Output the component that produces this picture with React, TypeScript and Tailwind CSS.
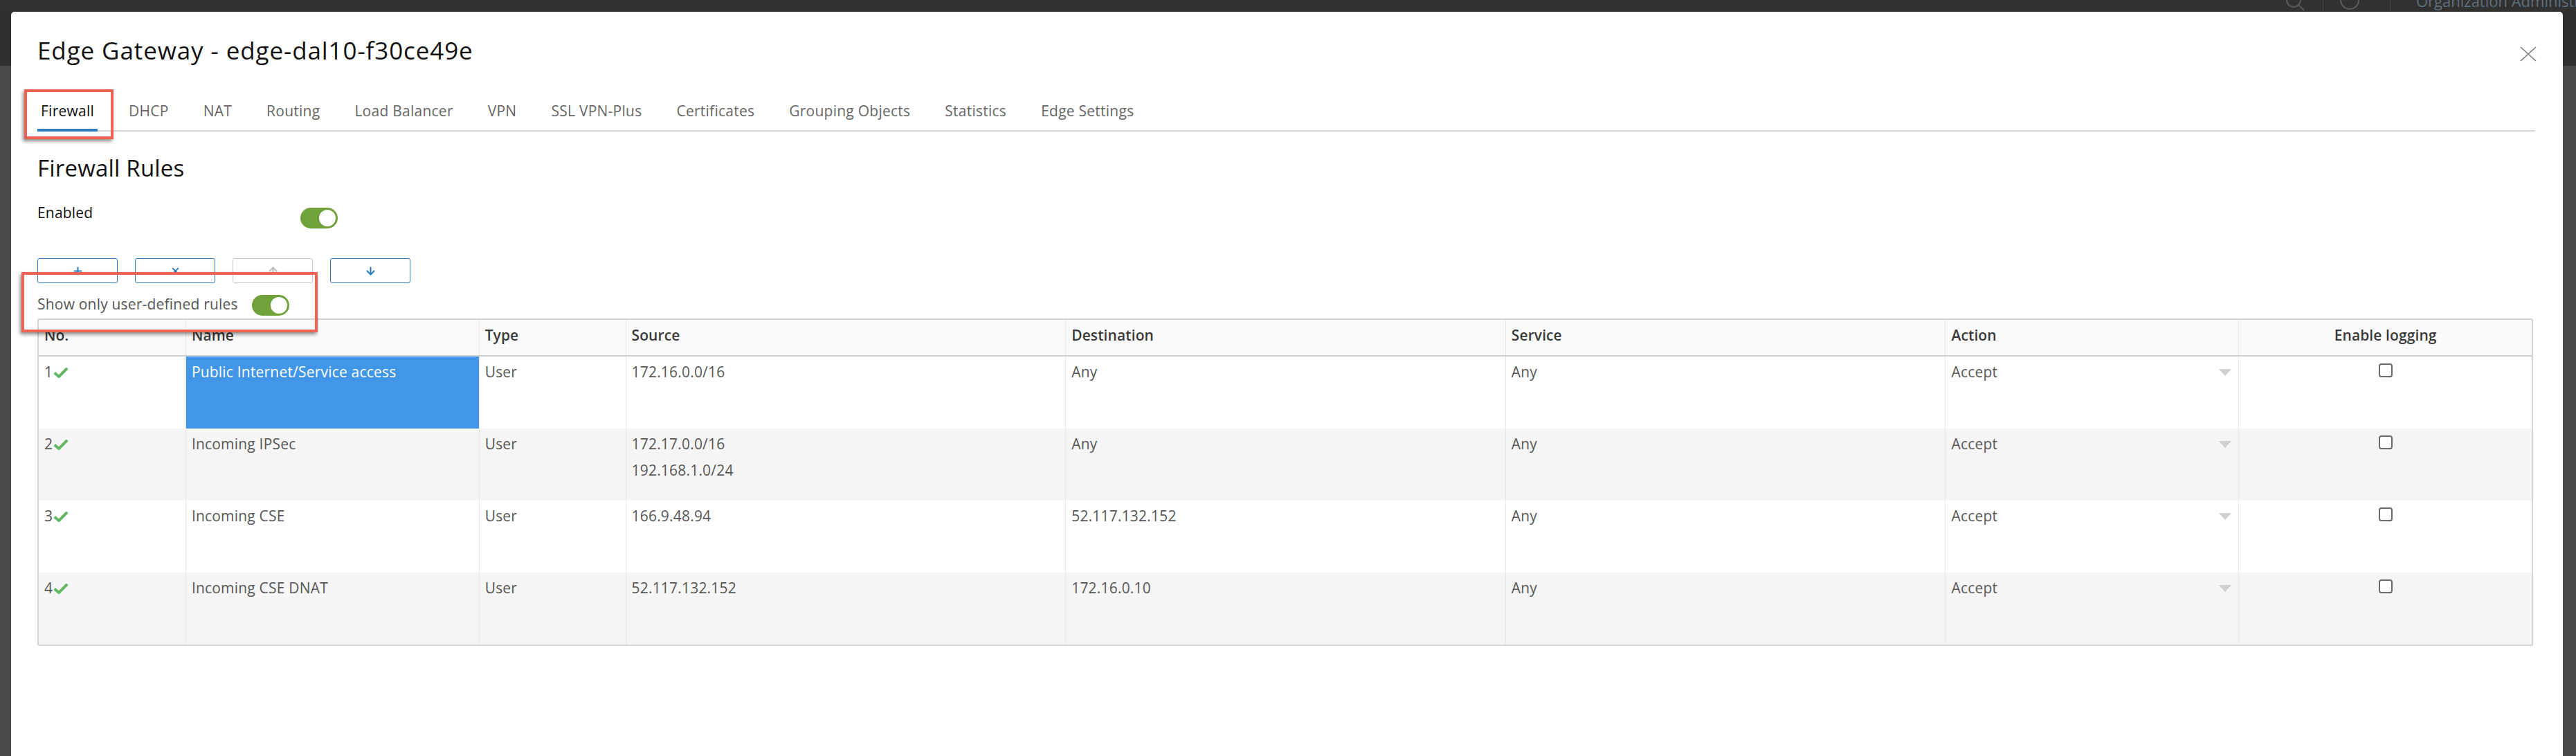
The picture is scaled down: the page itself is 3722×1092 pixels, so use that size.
import React from 'react';
import { ArrowDown, ArrowUp, Plus, X } from 'lucide-react';

const tabs = [
  'Firewall',
  'DHCP',
  'NAT',
  'Routing',
  'Load Balancer',
  'VPN',
  'SSL VPN-Plus',
  'Certificates',
  'Grouping Objects',
  'Statistics',
  'Edge Settings'
];

const rules = [
  { no: 1, name: 'Public Internet/Service access', source: ['172.16.0.0/16'], destination: 'Any', selected: true },
  { no: 2, name: 'Incoming IPSec', source: ['172.17.0.0/16', '192.168.1.0/24'], destination: 'Any' },
  { no: 3, name: 'Incoming CSE', source: ['166.9.48.94'], destination: '52.117.132.152' },
  { no: 4, name: 'Incoming CSE DNAT', source: ['52.117.132.152'], destination: '172.16.0.10' }
];

const Toggle = () => (
  <div className="flex h-[30px] w-[54px] items-center justify-end rounded-full bg-[#71a13b] p-[3px]">
    <div className="size-[24px] rounded-full bg-white" />
  </div>
);

const Check = () => (
  <svg width="22" height="16" viewBox="0 0 22 16" className="ml-[1px]">
    <path d="M1.8 8.5 L8 14 L20.2 1.8" fill="none" stroke="#62b562" strokeWidth="4" strokeLinejoin="round" />
  </svg>
);

const Gutter = ({ width }: { width: string }) => (
  <div className={`flex ${width} shrink-0 flex-col`}>
    <div className="h-[78px] bg-[#303030]" />
    <div className="flex-1 bg-[#4b4b4b]" />
  </div>
);

const TopBar = () => (
  <div className="flex h-[17px] shrink-0 items-start overflow-hidden bg-[#313131]">
    <div className="flex-1" />
    <svg width="34" height="17" viewBox="0 0 34 17" className="ml-auto">
      <circle cx="14" cy="0" r="10" fill="none" stroke="#5a5a5a" strokeWidth="2" />
      <path d="M21 7 L29 15" stroke="#5a5a5a" strokeWidth="2" />
    </svg>
    <div className="ml-[22px] h-[17px] w-px bg-[#444]" />
    <svg width="30" height="17" viewBox="0 0 30 17" className="ml-[24px]">
      <circle cx="14" cy="0" r="13" fill="none" stroke="#5a5a5a" strokeWidth="2" />
    </svg>
    <div className="ml-[42px] h-[17px] w-px bg-[#444]" />
    <span className="-mt-[12px] ml-[37px] w-[231px] whitespace-nowrap text-[22px] leading-[26px] text-[#5e6f7c]">
      Organization Administrator
    </span>
  </div>
);

const Table = () => (
  <div className="mt-[4px] w-[3606px] overflow-hidden rounded-[3px] border-2 border-[#d3d3d3]">
    <div className="grid h-[53px] grid-cols-[1fr_2fr_1fr_3fr_3fr_3fr_2fr_2fr] border-b-2 border-[#d0d0d0] bg-[#fafafa] text-[21px] font-semibold leading-[24px] tracking-[0.1px] text-[#3a3a3a]">
      {['No.', 'Name', 'Type', 'Source', 'Destination', 'Service', 'Action'].map((h, i) => (
        <div key={h} className={`px-[8px] pt-[10px] ${i ? 'border-l border-[#e8e8e8]' : ''}`}>
          {h}
        </div>
      ))}
      <div className="border-l border-[#e8e8e8] pt-[10px] text-center">Enable logging</div>
    </div>
    {rules.map((r, idx) => (
      <div
        key={r.no}
        className={`grid h-[104px] grid-cols-[1fr_2fr_1fr_3fr_3fr_3fr_2fr_2fr] text-[21px] leading-[24px] tracking-[0.2px] text-[#575757] ${
          idx % 2 ? 'bg-[#f5f5f5]' : 'bg-white'
        }`}
      >
        <div className="flex items-start px-[8px] pt-[10px]">
          <span>{r.no}</span>
          <span className="mt-[5px]">
            <Check />
          </span>
        </div>
        <div
          className={`border-l border-[#e8e8e8] px-[8px] pt-[10px] ${r.selected ? 'bg-[#4296e7] text-white' : ''}`}
        >
          {r.name}
        </div>
        <div className="border-l border-[#e8e8e8] px-[8px] pt-[10px]">User</div>
        <div className="flex flex-col gap-[14px] border-l border-[#e8e8e8] px-[8px] pt-[10px]">
          {r.source.map((s) => (
            <span key={s}>{s}</span>
          ))}
        </div>
        <div className="border-l border-[#e8e8e8] px-[8px] pt-[10px]">{r.destination}</div>
        <div className="border-l border-[#e8e8e8] px-[8px] pt-[10px]">Any</div>
        <div className="flex items-start justify-between border-l border-[#e8e8e8] pl-[8px] pr-[10px] pt-[10px]">
          <span>Accept</span>
          <svg width="18" height="10" viewBox="0 0 18 10" className="mt-[8px]">
            <path d="M0 0 H18 L9 10 Z" fill="#d0d0d0" />
          </svg>
        </div>
        <div className="flex justify-center border-l border-[#e8e8e8] pt-[10px]">
          <div className="size-[20px] rounded-[4px] border-2 border-[#6a6a6a] bg-white" />
        </div>
      </div>
    ))}
  </div>
);

export default function App() {
  return (
    <div className="flex h-[1092px] w-[3722px] flex-col overflow-hidden bg-[#313131] font-['Open_Sans',sans-serif]">
      <TopBar />
      <div className="flex min-h-0 flex-1">
        <Gutter width="w-[16px]" />
        <div className="relative flex-1 rounded-t-[5px] bg-white pl-[38px] pr-[40px]">
          <div className="mt-[36px] flex items-start justify-between">
            <h1 className="text-[35px] leading-[40px] tracking-[0.9px] text-[#111]">Edge Gateway - edge-dal10-f30ce49e</h1>
            <svg width="24" height="22" viewBox="0 0 24 22" className="mr-[-2px] mt-[14px]">
              <path d="M1 1 L23 21 M23 1 L1 21" stroke="#7a7a7a" strokeWidth="1.6" />
            </svg>
          </div>

          <div className="mt-[55px] flex gap-[40px] border-b-2 border-[#d7d7d7]">
            {tabs.map((t, i) => (
              <div
                key={t}
                className={`-mb-[2px] border-b-4 px-[5px] pb-[14px] text-[21px] leading-[24px] tracking-[0.25px] ${
                  i === 0 ? 'border-[#2f7dbf] text-[#111]' : 'border-transparent text-[#666]'
                }`}
              >
                {t}
              </div>
            ))}
          </div>

          <h2 className="mt-[34px] text-[33px] leading-[38px] tracking-[0.2px] text-[#111]">Firewall Rules</h2>

          <div className="mt-[33px] flex items-start">
            <span className="w-[380px] text-[21px] leading-[24px] tracking-[0.2px] text-[#111]">Enabled</span>
            <div className="mt-[5px]">
              <Toggle />
            </div>
          </div>

          <div className="mt-[43px] flex gap-[25px]">
            <button type="button" className="flex h-[36px] w-[116px] items-center justify-center rounded-[3px] border-[1.5px] border-[#2f7dbf] text-[#2f7dbf]">
              <Plus size={17} strokeWidth={3} />
            </button>
            <button type="button" className="flex h-[36px] w-[116px] items-center justify-center rounded-[3px] border-[1.5px] border-[#2f7dbf] text-[#2f7dbf]">
              <X size={15} strokeWidth={3} />
            </button>
            <button type="button" className="flex h-[36px] w-[116px] items-center justify-center rounded-[3px] border-[1.5px] border-[#c8c8c8] text-[#bdbdbd]">
              <ArrowUp size={17} strokeWidth={3} />
            </button>
            <button type="button" className="flex h-[36px] w-[116px] items-center justify-center rounded-[3px] border-[1.5px] border-[#2f7dbf] text-[#2f7dbf]">
              <ArrowDown size={17} strokeWidth={3} />
            </button>
          </div>

          <div className="mt-[17px] flex items-start gap-[20px]">
            <span className="pt-[1px] text-[21px] leading-[24px] tracking-[0.2px] text-[#565656]">Show only user-defined rules</span>
            <Toggle />
          </div>

          <Table />

          {/* annotation boxes */}
          <div className="absolute left-[19px] top-[112px] h-[72px] w-[129px] border-4 border-[#ec6453] shadow-[-2px_3px_5px_rgba(0,0,0,0.45)]" />
          <div className="absolute left-[15px] top-[376px] h-[87px] w-[428px] border-4 border-[#ec6453] shadow-[-2px_3px_5px_rgba(0,0,0,0.45)]" />
        </div>
        <Gutter width="w-[19px]" />
      </div>
    </div>
  );
}
